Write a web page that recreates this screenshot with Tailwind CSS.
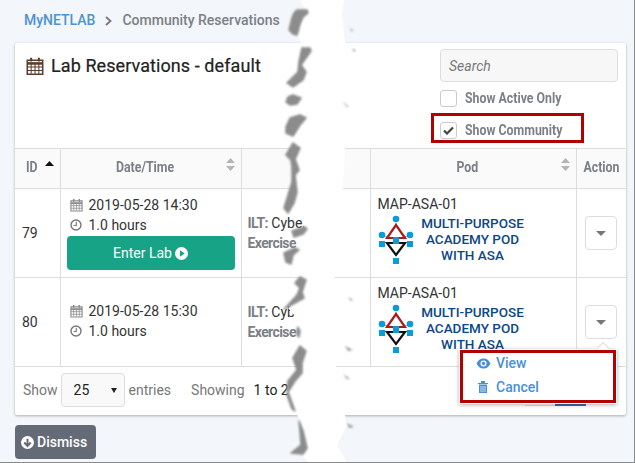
<!DOCTYPE html>
<html lang="en">
<head>
  <meta charset="UTF-8">
  <title>Lab Reservations</title>
  <script src="https://cdn.jsdelivr.net/npm/@tailwindcss/browser@4"></script>
</head>
<body class="font-['Roboto',sans-serif] text-[14px] text-[#333]">
  <svg class="hidden">
    <symbol id="pod-logo" viewBox="0 0 36 50">
      <path d="M18 8 L18 25 M4 20 L18 25 L32 20" stroke="#9aa" stroke-width="1" fill="none"/>
      <path d="M18 10 L9 23 H27 Z" fill="#fff" stroke="#a81c1c" stroke-width="2.2"/>
      <path d="M9 28 H27 L18 40 Z" fill="#fff" stroke="#111" stroke-width="2.2"/>
      <circle cx="18" cy="4" r="3.3" fill="#0a9bd8"/>
      <circle cx="4" cy="20" r="3.3" fill="#0a9bd8"/>
      <circle cx="32" cy="20" r="3.3" fill="#0a9bd8"/>
      <rect x="1" y="26" width="6" height="6" fill="#0a9bd8"/>
      <rect x="15" y="22" width="6" height="7" fill="#0a9bd8"/>
      <rect x="29" y="26" width="6" height="6" fill="#0a9bd8"/>
      <rect x="15" y="43" width="6" height="6" fill="#0a9bd8"/>
    </symbol>
    <symbol id="cal" viewBox="0 0 14 14">
      <path d="M1 2.5 H13 V13.5 H1 Z" fill="none" stroke="currentColor" stroke-width="1.2"/>
      <path d="M1 5 H13" stroke="currentColor" stroke-width="2"/>
      <path d="M1 7.7 H13 M1 10.5 H13 M4 5 V13 M7 5 V13 M10 5 V13" stroke="currentColor" stroke-width=".8"/>
      <path d="M4 .5 V3.5 M10 .5 V3.5" stroke="currentColor" stroke-width="1.6"/>
    </symbol>
    <symbol id="clock" viewBox="0 0 12 12">
      <circle cx="6" cy="6" r="5" fill="none" stroke="currentColor" stroke-width="1.4"/>
      <path d="M6.3 2.8 V6.5 H3.6" fill="none" stroke="currentColor" stroke-width="1.1"/>
    </symbol>
    <symbol id="sort" viewBox="0 0 9 13">
      <path d="M4.5 0 L9 5 H0 Z M4.5 13 L0 8 H9 Z" fill="#b5b5b5"/>
    </symbol>
    <symbol id="caret" viewBox="0 0 10 5">
      <path d="M0 0 H10 L5 5 Z" fill="#777"/>
    </symbol>
  </svg>

  <div class="relative w-[635px] h-[463px] overflow-hidden bg-[#f3f6fa] border-r border-b border-[#8a8a8a]">
    <!-- breadcrumb -->
    <div class="h-[43px] pl-[24px] pt-[11px] flex items-start gap-[10px] font-medium text-[14px] leading-[18px]">
      <span class="text-[#4f93d2]">MyNETLAB</span>
      <svg class="w-[7px] h-[10px] mt-[5px]" viewBox="0 0 7 10"><path d="M1 1 L5.5 5 L1 9" fill="none" stroke="#777" stroke-width="1.8"/></svg>
      <span class="text-[#7b7f86]">Community Reservations</span>
    </div>

    <!-- card -->
    <div class="relative ml-[15px] w-[611px] h-[372px] bg-white rounded-[2px] shadow-[0_1px_3px_rgba(0,0,0,0.3)]">
      <div class="h-[105px] flex justify-between">
        <h1 class="flex items-start gap-[7px] pl-[11px] pt-[10px] text-[18px] leading-[26px] tracking-[0.08px] font-normal text-[#222] [-webkit-text-stroke:0.2px_#222]">
          <svg class="w-[18px] h-[18px] mt-[4px] text-[#5a3d2b]"><use href="#cal"/></svg>
          Lab Reservations - default
        </h1>
        <div class="w-[178px] mr-[8px] pt-[6px]">
          <div class="h-[33px] border border-[#ddd] rounded-[4px] bg-[#f7f7f7] pl-[8px] leading-[32px] italic text-[#777]">Search</div>
          <label class="flex items-center gap-[8px] mt-[7px] h-[18px]">
            <span class="w-[17px] h-[17px] border border-[#ccc] rounded-[3px] bg-white"></span>
            <span class="origin-left scale-x-[0.88] whitespace-nowrap font-bold text-[14px] text-[#7b7f86]">Show Active Only</span>
          </label>
          <label class="flex items-center gap-[8px] mt-[14px] h-[18px]">
            <span class="flex items-center justify-center w-[17px] h-[17px] border border-[#ccc] rounded-[3px] bg-white">
              <svg class="w-[11px] h-[9px]" viewBox="0 0 11 9"><path d="M1 4.5 L4 7.5 L10 1.5" fill="none" stroke="#444" stroke-width="2.2"/></svg>
            </span>
            <span class="origin-left scale-x-[0.88] whitespace-nowrap font-bold text-[14px] text-[#7b7f86]">Show Community</span>
          </label>
        </div>
      </div>
      <!-- red highlight round the checkbox -->
      <div class="absolute left-[416px] top-[70px] w-[153px] h-[30px] border-[3px] border-[#b30000]"></div>

      <table class="w-[611px] table-fixed border-collapse">
        <colgroup>
          <col class="w-[45px]"><col class="w-[181px]"><col class="w-[129px]"><col class="w-[206px]"><col class="w-[50px]">
        </colgroup>
        <thead>
          <tr class="h-[40px] bg-[#fafafa] border-y border-[#ddd] font-bold text-[14px] text-[#7b7f86]">
            <th class="relative text-left pl-[11px] pb-[2px]"><span class="inline-block origin-left scale-x-[0.88]">ID</span>
              <svg class="absolute left-[30px] top-[12px] w-[9px] h-[5px]" viewBox="0 0 9 5"><path d="M4.5 0 L9 5 H0 Z" fill="#111"/></svg>
            </th>
            <th class="relative border-l border-[#ddd] pr-[10px] pb-[2px]"><span class="inline-block scale-x-[0.88]">Date/Time</span>
              <svg class="absolute right-[6px] top-[9px] w-[9px] h-[13px]"><use href="#sort"/></svg>
            </th>
            <th class="border-l border-[#ddd]"></th>
            <th class="relative border-l border-[#ddd] pr-[11px] pb-[2px]"><span class="inline-block scale-x-[0.88]">Pod</span>
              <svg class="absolute right-[6px] top-[9px] w-[9px] h-[13px]"><use href="#sort"/></svg>
            </th>
            <th class="border-l border-[#ddd] pb-[2px]"><span class="inline-block scale-x-[0.88]">Action</span></th>
          </tr>
        </thead>
        <tbody>
          <tr class="h-[89px] border-b border-[#ddd]">
            <td class="pl-[7px]">79</td>
            <td class="border-l border-[#ddd] px-[6px] align-top pt-[6px]">
              <div class="flex items-center gap-[6px] h-[20px] pl-[3px]"><svg class="w-[13px] h-[14px] text-[#8b8b8b]"><use href="#cal"/></svg>2019-05-28 14:30</div>
              <div class="flex items-center gap-[7px] h-[20px] pl-[3px]"><svg class="w-[12px] h-[12px] text-[#777]"><use href="#clock"/></svg>1.0 hours</div>
              <div class="flex items-center justify-center gap-[3px] h-[34px] mt-[1px] rounded-[4px] bg-[#17a385] text-white">Enter Lab
                <svg class="w-[13px] h-[13px]" viewBox="0 0 12 12"><circle cx="6" cy="6" r="6" fill="#fff"/><path d="M4.5 3 L9 6 L4.5 9 Z" fill="#17a385"/></svg>
              </div>
            </td>
            <td class="border-l border-[#ddd] pl-[6px] leading-[20px] whitespace-nowrap overflow-hidden"><b class="text-[14px] tracking-[-0.6px] text-[#7b7f86]">ILT:</b> Cyber<br><b class="text-[14px] tracking-[-0.6px] text-[#7b7f86]">Exercise</b></td>
            <td class="border-l border-[#ddd] pl-[7px] align-top pt-[6px]">
              <div class="leading-[18px] h-[19px]">MAP-ASA-01</div>
              <div class="flex">
                <svg class="w-[36px] h-[50px] mt-[1px]"><use href="#pod-logo"/></svg>
                <div class="w-[110px] ml-[4px] pt-[1px] text-center text-[#0b4884] font-medium text-[13.5px] leading-[16px]">MULTI-PURPOSE<br>ACADEMY POD<br>WITH ASA</div>
              </div>
            </td>
            <td class="border-l border-[#ddd] text-center">
              <div class="inline-flex items-center justify-center w-[32px] h-[34px] border border-[#ddd] rounded-[4px] bg-white"><svg class="w-[10px] h-[5px]"><use href="#caret"/></svg></div>
            </td>
          </tr>
          <tr class="h-[89px] border-b border-[#ddd]">
            <td class="pl-[7px]">80</td>
            <td class="border-l border-[#ddd] px-[6px] align-top pt-[6px]">
              <div class="flex items-center gap-[6px] h-[20px] pl-[3px] mt-[17px]"><svg class="w-[13px] h-[14px] text-[#8b8b8b]"><use href="#cal"/></svg>2019-05-28 15:30</div>
              <div class="flex items-center gap-[7px] h-[20px] pl-[3px]"><svg class="w-[12px] h-[12px] text-[#777]"><use href="#clock"/></svg>1.0 hours</div>
            </td>
            <td class="border-l border-[#ddd] pl-[6px] leading-[20px] whitespace-nowrap overflow-hidden"><b class="text-[14px] tracking-[-0.6px] text-[#7b7f86]">ILT:</b> Cyber<br><b class="text-[14px] tracking-[-0.6px] text-[#7b7f86]">Exercise</b></td>
            <td class="border-l border-[#ddd] pl-[7px] align-top pt-[6px]">
              <div class="leading-[18px] h-[19px]">MAP-ASA-01</div>
              <div class="flex">
                <svg class="w-[36px] h-[50px] mt-[1px]"><use href="#pod-logo"/></svg>
                <div class="w-[110px] ml-[4px] pt-[1px] text-center text-[#0b4884] font-medium text-[13.5px] leading-[16px]">MULTI-PURPOSE<br>ACADEMY POD<br>WITH ASA</div>
              </div>
            </td>
            <td class="border-l border-[#ddd] text-center">
              <div class="inline-flex items-center justify-center w-[32px] h-[34px] border border-[#ddd] rounded-[4px] bg-white"><svg class="w-[10px] h-[5px]"><use href="#caret"/></svg></div>
            </td>
          </tr>
        </tbody>
      </table>

      <!-- footer -->
      <div class="flex items-center h-[48px] pl-[8px] pb-[2px] text-[#777]">
        <span>Show</span>
        <div class="flex items-center justify-between w-[64px] h-[34px] ml-[3px] pl-[12px] pr-[7px] border border-[#ddd] rounded-[4px] bg-[#f9f9f9] text-[#222]">25
          <svg class="w-[6px] h-[5px]" viewBox="0 0 6 5"><path d="M0 0 H6 L3 5 Z" fill="#222"/></svg>
        </div>
        <span class="ml-[4px]">entries</span>
        <span class="ml-[20px]">Showing</span>
        <span class="ml-[9px] text-[#222]">1 to 2 of 2</span>
        <div class="flex items-end ml-auto mr-[40px] self-end mb-[7px]">
          <span class="w-[30px] h-[1px] bg-[#ddd]"></span>
          <span class="w-[31px] h-[2px] bg-[#2f6fa8]"></span>
        </div>
      </div>

      <!-- action menu, open over the table -->
      <div class="absolute left-[444px] top-[306px] w-[158px] h-[55px] bg-white shadow-[0_1px_4px_rgba(0,0,0,0.3)]">
        <div class="absolute right-[9px] top-[-5px] w-[10px] h-[10px] rotate-45 bg-white border-l border-t border-[#ddd]"></div>
        <div class="relative m-[1px] h-[53px] border-[3px] border-[#b30000] flex flex-col pl-[13px] text-[#4a90d9] font-medium bg-white">
          <div class="flex items-center gap-[5px] h-[20px]">
            <svg class="w-[15px] h-[11px]" viewBox="0 0 15 11"><path d="M.5 5.5 C3 1 5 .5 7.5 .5 S12 1 14.5 5.5 C12 10 10 10.5 7.5 10.5 S3 10 .5 5.5 Z" fill="#4a90d9"/><circle cx="7.5" cy="5.5" r="3" fill="#fff"/><circle cx="7.5" cy="5.5" r="1.7" fill="#4a90d9"/></svg>
            View
          </div>
          <div class="flex items-center gap-[8px] h-[24px] mt-[2px] pl-[2px]">
            <svg class="w-[10px] h-[12px]" viewBox="0 0 10 12"><path d="M0 2 H10 V3 H0 Z M3 0 H7 V2 H3 Z M1 3.5 H9 V12 H1 Z" fill="#4a90d9"/><path d="M3 5 V11 M5 5 V11 M7 5 V11" stroke="#fff" stroke-width=".7"/></svg>
            Cancel
          </div>
        </div>
      </div>
    </div>

    <div class="flex items-center gap-[3px] w-[81px] h-[34px] ml-[15px] mt-[10px] pl-[6px] rounded-[4px] bg-[#646b76] text-white font-medium">
      <svg class="w-[13px] h-[13px]" viewBox="0 0 12 12"><circle cx="6" cy="6" r="6" fill="#fff"/><path d="M6 2.5 V9 M3 6 L6 9.3 L9 6" fill="none" stroke="#646b76" stroke-width="1.8"/></svg>
      Dismiss
    </div>

    <!-- torn paper strip over the page -->
    <svg class="absolute left-0 top-0 w-[635px] h-[463px]" viewBox="0 0 635 463">
      <defs><filter id="soft" x="-30%" y="-30%" width="160%" height="160%"><feGaussianBlur stdDeviation="0.9"/></filter></defs>
      <polygon fill="#fff" points="300,0 306,10 309,13 303,18 300,26 298,36 302,45 310,47 312,51 306,58 301,65 306,72 303,80 296,88 301,94 302,98 297,105 300,112 307,118 300,125 294,137 300,148 297,155 296,160 300,170 296,175 298,192 296,204 290,212 302,216 303,226 308,229 303,235 295,240 300,250 294,256 292,268 300,276 307,280 303,292 305,298 293,305 288,308 295,316 300,331 298,340 307,351 303,363 303,373 295,382 288,392 291,400 296,413 300,420 303,431 308,448 303,456 310,463 347,463 337,445 347,425 345,415 336,370 335,278 343,190 345,148 345,42 342,15 344,0"/>
      <g fill="#8c8c8c" stroke="#8c8c8c" stroke-width="1.5" stroke-linejoin="round" filter="url(#soft)">
        <polygon points="297,10 307,10 308,13 303,17 300,24 297,35 293,34 289,30 290,26 292,18 294,13"/>
        <polygon points="302,48 310,48 311,51 306,58 301,65 306,72 303,80 293,87 287,83 292,78 298,72 299,62"/>
        <polygon points="293,95 301,98 297,104 290,105 286,102 288,97"/>
        <polygon points="300,115 306,118 300,125 293,136 286,133 286,127 290,118"/>
        <polygon points="293,143 300,148 297,155 295,159 299,170 295,175 297,192 294,203 288,213 284,208 288,195 292,182 292,168 291,160 286,155"/>
        <polygon points="292,231 305,227 307,229 303,234 294,237"/>
        <polygon points="295,248 299,250 293,255 291,264 286,262 284,253"/>
        <polygon points="300,277 306,280 302,292 304,298 293,304 284,309 288,305 297,295 300,288 295,283"/>
        <polygon points="298,327 300,331 299,337 297,335 297,330"/>
        <polygon points="300,346 306,351 302,363 302,373 295,381 288,392 291,400 295,411 292,409 287,395 288,381 297,370 293,358"/>
        <polygon points="299,421 303,431 307,448 303,454 291,453 301,445 300,431"/>
      </g>
      <g fill="#9a9a9a" filter="url(#soft)">
        <polygon points="350,28 353,30 352,32"/>
        <polygon points="352,49 356,50 354,52"/>
        <polygon points="342,101 349,107 347,107"/>
        <polygon points="348,297 353,300 351,301"/>
        <polygon points="345,346 353,350 348,351"/>
        <polygon points="343,374 350,379 347,379"/>
        <polygon points="347,423 354,427 349,428"/>
      </g>
    </svg>
  </div>
</body>
</html>
